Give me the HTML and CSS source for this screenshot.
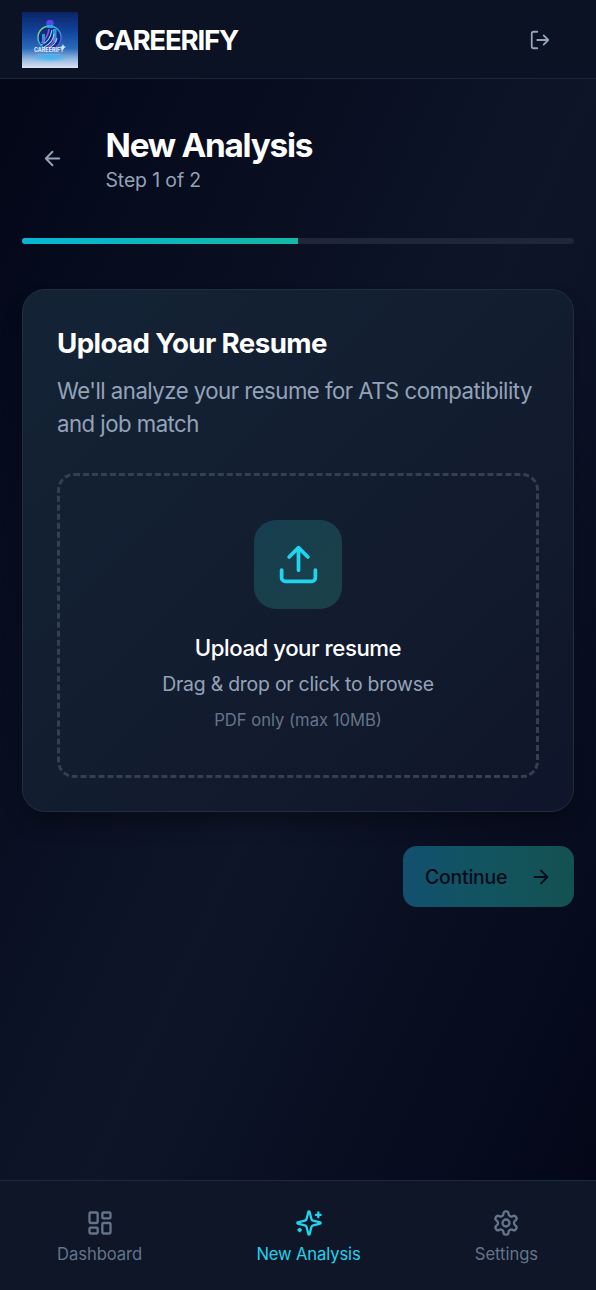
FILE: index.html
```
<!doctype html>
<html lang="en">
<head>
	<meta charset="UTF-8">
	<title>Careerify</title>
	<link rel="stylesheet" href="styles.css">
</head>
<body>
	<header class="top">
		<svg class="logo" viewBox="0 0 56 56">
			<defs>
				<linearGradient id="sky" x1="0" y1="0" x2="0" y2="1">
					<stop offset="0" stop-color="#0c2366"/>
					<stop offset=".35" stop-color="#12439a"/>
					<stop offset=".65" stop-color="#2a6abb"/>
					<stop offset=".84" stop-color="#94b8df"/>
					<stop offset="1" stop-color="#dbe3f2"/>
				</linearGradient>
				<linearGradient id="ring" x1="0" y1="0" x2="1" y2="1">
					<stop offset="0" stop-color="#b5e34a"/>
					<stop offset=".45" stop-color="#20bce0"/>
					<stop offset="1" stop-color="#6a3df0"/>
				</linearGradient>
				<radialGradient id="glow">
					<stop offset="0" stop-color="#35b8f5"/>
					<stop offset="1" stop-color="#35b8f5" stop-opacity="0"/>
				</radialGradient>
			</defs>
			<rect width="56" height="56" fill="url(#sky)"/>
			<ellipse cx="28" cy="45.5" rx="20" ry="4.5" fill="url(#glow)"/>
			<circle cx="27.5" cy="25.5" r="11.5" fill="#102c7c" stroke="url(#ring)" stroke-width="1.4"/>
			<path d="M20 31v-9h3v9M31 30V17h3.5v13" fill="#269bdd"/>
			<path d="M19 33q9-3 11-15M22 35q9-4 10-13M27 36q7-4 8-10" fill="none" stroke="#8ad6f4" stroke-width="1.2"/>
			<path d="M27 17q-1 9-8 14M25 36q7-4 8-12" fill="none" stroke="#a050ef" stroke-width="1.5"/>
			<circle cx="28" cy="11.5" r="3.8" fill="#5746e8"/>
			<path d="M25 13h6v3h-6z" fill="#25a6eb"/>
			<path d="M41 32l1 2 2 1-2 1-1 2-1-2-2-1 2-1z" fill="#bcdcff"/>
			<text x="12" y="40" textLength="30" lengthAdjust="spacingAndGlyphs">CAREERIFY</text>
			<path d="M16 42.3h23" stroke="#78b5ed" stroke-width=".6"/>
		</svg>
		<span class="brand">CAREERIFY</span>
		<button class="logout">
			<svg class="icon" viewBox="0 0 24 24"><path d="m16 17 5-5-5-5M21 12H9M9 21H5a2 2 0 0 1-2-2V5a2 2 0 0 1 2-2h4"/></svg>
		</button>
	</header>

	<main class="main">
		<div class="heading">
			<button class="back">
				<svg class="icon" viewBox="0 0 24 24"><path d="m12 19-7-7 7-7M19 12H5"/></svg>
			</button>
			<div>
				<h1>New Analysis</h1>
				<p>Step 1 of 2</p>
			</div>
		</div>
		<div class="progress"><div class="bar" style="width:50%"></div></div>

		<section class="card">
			<h2>Upload Your Resume</h2>
			<p class="desc">We'll analyze your resume for ATS compatibility and job match</p>
			<div class="drop">
				<div class="tile">
					<svg class="icon" viewBox="0 0 24 24"><path d="M12 3v12M17 8l-5-5-5 5M21 15v4a2 2 0 0 1-2 2H5a2 2 0 0 1-2-2v-4"/></svg>
				</div>
				<p class="drop-title">Upload your resume</p>
				<p class="drop-text">Drag &amp; drop or click to browse</p>
				<p class="drop-note">PDF only (max 10MB)</p>
			</div>
		</section>

		<button class="next" disabled>
			Continue
			<svg class="icon" viewBox="0 0 24 24"><path d="M5 12h14M12 5l7 7-7 7"/></svg>
		</button>
	</main>

	<nav class="tabs">
		<a class="tab">
			<svg class="icon" viewBox="0 0 24 24"><rect x="3" y="3" width="7" height="9" rx="1"/><rect x="14" y="3" width="7" height="5" rx="1"/><rect x="14" y="12" width="7" height="9" rx="1"/><rect x="3" y="16" width="7" height="5" rx="1"/></svg>
			Dashboard
		</a>
		<a class="tab active">
			<svg class="icon" viewBox="0 0 24 24"><path d="M9.937 15.5A2 2 0 0 0 8.5 14.063l-6.135-1.582a.5.5 0 0 1 0-.962L8.5 9.936A2 2 0 0 0 9.937 8.5l1.582-6.135a.5.5 0 0 1 .963 0L14.063 8.5A2 2 0 0 0 15.5 9.937l6.135 1.581a.5.5 0 0 1 0 .964L15.5 14.063a2 2 0 0 0-1.437 1.437l-1.582 6.135a.5.5 0 0 1-.963 0zM20 3v4M22 5h-4M4 17v2M5 18H3"/></svg>
			New Analysis
		</a>
		<a class="tab">
			<svg class="icon" viewBox="0 0 24 24"><path d="M12.22 2h-.44a2 2 0 0 0-2 2v.18a2 2 0 0 1-1 1.73l-.43.25a2 2 0 0 1-2 0l-.15-.08a2 2 0 0 0-2.73.73l-.22.38a2 2 0 0 0 .73 2.73l.15.1a2 2 0 0 1 1 1.72v.51a2 2 0 0 1-1 1.74l-.15.09a2 2 0 0 0-.73 2.73l.22.38a2 2 0 0 0 2.73.73l.15-.08a2 2 0 0 1 2 0l.43.25a2 2 0 0 1 1 1.73V20a2 2 0 0 0 2 2h.44a2 2 0 0 0 2-2v-.18a2 2 0 0 1 1-1.73l.43-.25a2 2 0 0 1 2 0l.15.08a2 2 0 0 0 2.73-.73l.22-.39a2 2 0 0 0-.73-2.73l-.15-.08a2 2 0 0 1-1-1.74v-.5a2 2 0 0 1 1-1.74l.15-.09a2 2 0 0 0 .73-2.73l-.22-.38a2 2 0 0 0-2.73-.73l-.15.08a2 2 0 0 1-2 0l-.43-.25a2 2 0 0 1-1-1.73V4a2 2 0 0 0-2-2z"/><circle cx="12" cy="12" r="3"/></svg>
			Settings
		</a>
	</nav>
</body>
</html>
```
FILE: styles.css
```
* { box-sizing:border-box; margin:0; padding:0; }
body { height:1290px; display:flex; flex-direction:column; overflow:hidden; background:linear-gradient(to bottom right,#020617,#0e1528 53%,#020617); color:#fff; font-family:Inter,"Liberation Sans",sans-serif; font-size:22.2px; }
button { border:0; background:none; font:inherit; color:inherit; }
.icon { display:block; width:22px; height:22px; fill:none; stroke:currentColor; stroke-width:2; stroke-linecap:round; stroke-linejoin:round; flex:none; }

.top { height:79px; flex:none; display:flex; align-items:center; padding:1px 22px 0; background:#0a1224; border-bottom:1px solid #1d2638; }
.logo { width:56px; height:56px; flex:none; }
.logo text { font-size:6px; font-weight:700; fill:#e5efff; }
.brand { margin-left:16.5px; font-size:27.7px; font-weight:700; letter-spacing:-1.25px; }
.logout { margin-left:auto; padding:0 23px; color:#94a3b8; }

.main { flex:1; padding:46px 22px 0; }
.heading { display:flex; align-items:center; height:66px; }
.back { width:61px; padding-left:19px; margin-right:22.5px; color:#94a3b8; }
.back .icon { width:23px; height:23px; }
h1 { font-size:33.3px; line-height:40px; font-weight:700; letter-spacing:-1.25px; padding-top:3px; }
.heading p { font-size:19.4px; line-height:30px; color:#94a3b8; letter-spacing:-0.1px; }
.progress { height:6px; margin-top:47px; border-radius:3px; background:#1e2637; overflow:hidden; }
.bar { height:6px; background:linear-gradient(to right,#06b6d4,#14b8a6); }

.card { height:523px; margin-top:45px; padding:33px 34px; border:1px solid #222e40; border-radius:23px; background:linear-gradient(to bottom right,#132335,#131d30 50%,#0f152a); box-shadow:0 14px 21px -4px rgba(0,0,0,0.35); }
h2 { font-size:27.7px; line-height:40px; font-weight:700; letter-spacing:-0.6px; }
.desc { margin-top:11px; font-size:22.2px; line-height:33.3px; color:#94a3b8; letter-spacing:-0.52px; }
.drop { height:305px; margin-top:32px; padding-top:44px; border:3px dashed #344052; border-radius:17px; text-align:center; }
.tile { width:88px; height:89px; margin:0 auto 22px; display:flex; align-items:center; justify-content:center; border-radius:22px; background:linear-gradient(to bottom right,#173e50,#1a4048); color:#22d3ee; }
.tile .icon { width:45px; height:45px; }
.drop-title { font-size:22.2px; line-height:34px; font-weight:500; letter-spacing:-0.45px; }
.drop-text { margin-top:5px; font-size:19.4px; line-height:28px; color:#94a3b8; letter-spacing:-0.22px; }
.drop-note { margin-top:11px; font-size:16.6px; line-height:22px; color:#64748b; }

.next { width:171px; height:61px; margin:34px 0 0 auto; padding:0 22px; display:flex; align-items:center; justify-content:space-between; border-radius:14px; background:linear-gradient(to right,#12506f,#12545f 50%,#145152); color:#020b18; font-size:19.4px; font-weight:500; letter-spacing:-0.2px; }

.tabs { height:110px; flex:none; display:flex; justify-content:space-between; padding:28px 41px 0 40px; background:#0e1628; border-top:1px solid #1f283a; color:#64748b; }
.tab { display:flex; flex-direction:column; align-items:center; gap:6px; padding:0 17px; font-size:16.6px; line-height:22px; letter-spacing:-0.05px; }
.tab .icon { width:28px; height:28px; }
.active { color:#22d3ee; letter-spacing:-0.12px; }
```
